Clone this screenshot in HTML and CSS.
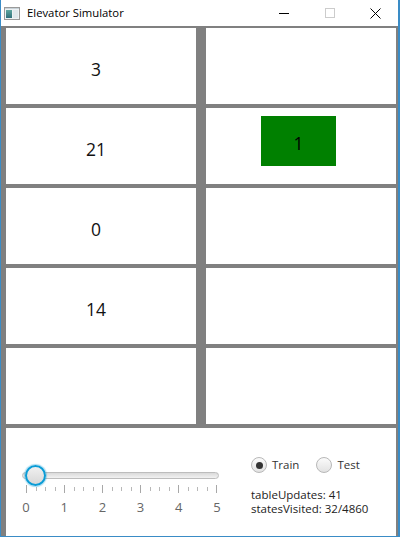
FILE: index.html
```html
<!DOCTYPE html>
<html>
<head>
<meta charset="utf-8">
<title>Elevator Simulator</title>
<link rel="stylesheet" href="styles.css">
</head>
<body>
<div class="window">
  <div class="titlebar">
    <svg class="appicon" width="16" height="13" viewBox="0 0 16 13">
      <defs>
        <linearGradient id="g1" x1="0" y1="0" x2="0" y2="1">
          <stop offset="0" stop-color="#5fa7a0"/>
          <stop offset="1" stop-color="#2f6f7a"/>
        </linearGradient>
      </defs>
      <rect x="0.5" y="0.5" width="15" height="12" fill="#eef2f4" stroke="#9a9a9a"/>
      <rect x="2" y="3" width="6" height="8" fill="url(#g1)"/>
      <rect x="9" y="3" width="5" height="8" fill="#dfe8ec"/>
      <rect x="1" y="1" width="14" height="1" fill="#c8d2d8"/>
    </svg>
    <span class="title">Elevator Simulator</span>
    <div class="controls">
      <svg class="ctl" width="46" height="26" viewBox="0 0 46 26"><line x1="18" y1="13.5" x2="28" y2="13.5" stroke="#000" stroke-width="1"/></svg>
      <svg class="ctl" width="46" height="26" viewBox="0 0 46 26"><rect x="18.5" y="8.5" width="9" height="9" fill="none" stroke="#cccccc" stroke-width="1"/></svg>
      <svg class="ctl" width="46" height="26" viewBox="0 0 46 26"><path d="M17.5 8.5 L27.5 18.5 M27.5 8.5 L17.5 18.5" stroke="#000" stroke-width="1"/></svg>
    </div>
  </div>
  <div class="content">
    <div class="grid">
      <div class="cell num">3</div>
      <div class="cell car"></div>
      <div class="cell num">21</div>
      <div class="cell car"><div class="elevator">1</div></div>
      <div class="cell num">0</div>
      <div class="cell car"></div>
      <div class="cell num">14</div>
      <div class="cell car"></div>
      <div class="cell num"></div>
      <div class="cell car"></div>
    </div>
    <div class="panel">
      <div class="slidercol">
        <div class="slider">
          <div class="track"></div>
          <div class="thumb"></div>
          <div class="ticks">
            <span class="tick major"></span><span class="tick"></span><span class="tick"></span><span class="tick"></span>
            <span class="tick major"></span><span class="tick"></span><span class="tick"></span><span class="tick"></span>
            <span class="tick major"></span><span class="tick"></span><span class="tick"></span><span class="tick"></span>
            <span class="tick major"></span><span class="tick"></span><span class="tick"></span><span class="tick"></span>
            <span class="tick major"></span><span class="tick"></span><span class="tick"></span><span class="tick"></span>
            <span class="tick major"></span>
          </div>
          <div class="labels">
            <span>0</span><span>1</span><span>2</span><span>3</span><span>4</span><span>5</span>
          </div>
        </div>
      </div>
      <div class="infocol">
        <div class="radios">
          <div class="radio"><span class="dot selected"></span><span class="rlabel">Train</span></div>
          <div class="radio"><span class="dot"></span><span class="rlabel">Test</span></div>
        </div>
        <div class="stats">
          <div>tableUpdates: 41</div>
          <div>statesVisited: 32/4860</div>
        </div>
      </div>
    </div>
  </div>
</div>
</body>
</html>
```

FILE: styles.css
```css
html, body {
  margin: 0;
  padding: 0;
  background: #ffffff;
}
body {
  width: 400px;
  height: 537px;
  overflow: hidden;
  font-family: "Open Sans", "Noto Sans", sans-serif;
}
.window {
  width: 400px;
  height: 537px;
  box-sizing: border-box;
  border-left: 1px solid #3a8cc6;
  border-right: 2px solid #3a8cc6;
  border-bottom: 1px solid #3a8cc6;
  display: flex;
  flex-direction: column;
}
.titlebar {
  height: 26px;
  flex: none;
  background: #ffffff;
  display: flex;
  align-items: center;
}
.appicon {
  margin-left: 3px;
  flex: none;
}
.title {
  margin-left: 7px;
  font-size: 11.3px;
  color: #000;
  line-height: 26px;
}
.controls {
  margin-left: auto;
  display: flex;
  margin-right: -1px;
}
.ctl {
  display: block;
}
.content {
  flex: 1;
  background: #808080;
  padding: 2px 2px 0 5px;
  display: flex;
  flex-direction: column;
  gap: 4px;
}
.grid {
  display: grid;
  grid-template-columns: 190px 190px;
  grid-template-rows: repeat(5, 76px);
  column-gap: 10px;
  row-gap: 4px;
}
.cell {
  background: #ffffff;
  display: flex;
  align-items: center;
  justify-content: center;
  box-sizing: border-box;
}
.num {
  font-size: 17.5px;
  color: #111;
  padding-right: 10px;
  padding-top: 6px;
}
.car {
  padding-right: 5px;
  padding-bottom: 10px;
}
.elevator {
  width: 75px;
  height: 50px;
  background: #008000;
  display: flex;
  align-items: center;
  justify-content: center;
  font-size: 17.5px;
  color: #000;
  padding-top: 3px;
  box-sizing: border-box;
}
.panel {
  flex: 1;
  background: #ffffff;
  display: flex;
}
.slidercol {
  width: 245px;
  flex: none;
  padding-top: 44px;
  box-sizing: border-box;
}
.slider {
  position: relative;
  margin-left: 16px;
  width: 197px;
}
.track {
  height: 7px;
  box-sizing: border-box;
  border: 1px solid #bdbdbd;
  border-radius: 4px;
  background: linear-gradient(#dadada, #f2f2f2);
}
.thumb {
  position: absolute;
  left: 3px;
  top: -7px;
  width: 21px;
  height: 21px;
  box-sizing: border-box;
  border-radius: 50%;
  border: 2px solid #0a9cd6;
  background: linear-gradient(#f0f0f0, #d8d8d8);
  box-shadow: 0 0 1px 1px rgba(10, 156, 214, 0.35);
}
.ticks {
  margin-top: 6px;
  margin-left: 4px;
  width: 191px;
  display: flex;
  justify-content: space-between;
  align-items: flex-start;
}
.tick {
  width: 1px;
  height: 4px;
  margin-top: 2px;
  background: #b8b8b8;
}
.tick.major {
  height: 8px;
  margin-top: 0;
  background: #a8a8a8;
}
.labels {
  margin-top: 6px;
  margin-left: -6px;
  width: 211px;
  display: flex;
  justify-content: space-between;
}
.labels span {
  width: 20px;
  text-align: center;
  font-size: 13px;
  line-height: 16px;
  color: #666;
}
.infocol {
  padding-top: 29px;
  display: flex;
  flex-direction: column;
}
.radios {
  display: flex;
  align-items: center;
  gap: 17px;
  height: 16px;
}
.radio {
  display: flex;
  align-items: center;
  gap: 5px;
}
.dot {
  width: 16px;
  height: 16px;
  box-sizing: border-box;
  border-radius: 50%;
  border: 1px solid #b8b8b8;
  background: linear-gradient(#fbfbfb, #e2e2e2);
  display: flex;
  align-items: center;
  justify-content: center;
}
.dot.selected::after {
  content: "";
  width: 7px;
  height: 7px;
  border-radius: 50%;
  background: #333;
}
.rlabel {
  font-size: 11.5px;
  color: #333;
  line-height: 16px;
}
.stats {
  margin-top: 15px;
  font-size: 11.5px;
  line-height: 14px;
  color: #222;
}
```
